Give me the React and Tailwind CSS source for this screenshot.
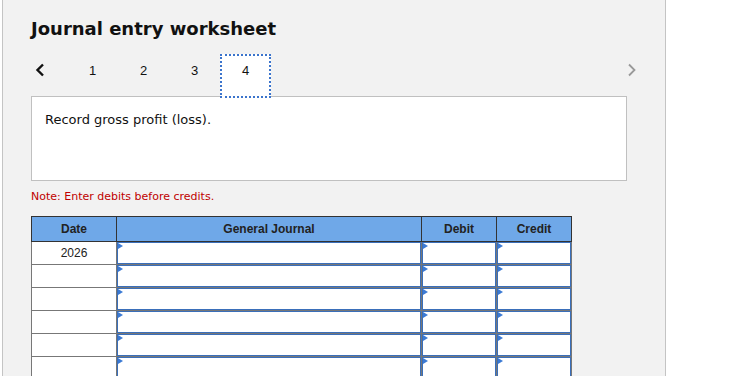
import React from "react";

const rows = ["2026", "", "", "", "", "", ""];

const InputCell = () => (
  <div className="relative h-[22px] border border-[#3a6fba] bg-white">
    <span className="absolute left-0 top-0 h-0 w-0 border-y-[3px] border-l-[5px] border-y-transparent border-l-[#3b7ad4]"></span>
  </div>
);

const App = () => {
  return (
    <div className="h-[376px] w-[745px] overflow-hidden bg-white">
      <div className="ml-[2px] h-[376px] w-[664px] border-x border-[#c4c4c4] bg-[#f2f2f2] pl-[28px] font-['DejaVu_Sans',sans-serif]">
        <h1 className="pt-[18px] text-[18px] font-bold leading-[22px] text-[#111]">
          Journal entry worksheet
        </h1>

        <div className="relative z-10 -mb-[2px] mt-[14px] flex h-[44px] w-[608px] items-start font-['Liberation_Sans',sans-serif] text-[13px] leading-[16px] text-[#111]">
          <div className="flex w-[36px] pl-[4px] pt-[9px]">
            <svg width="10" height="14" viewBox="0 0 10 14">
              <polyline points="8,1.5 2.5,7 8,12.5" fill="none" stroke="#111" strokeWidth="2.4" />
            </svg>
          </div>
          <div className="flex h-full w-[51px] justify-center pt-[9px]">1</div>
          <div className="flex h-full w-[51px] justify-center pt-[9px]">2</div>
          <div className="flex h-full w-[51px] justify-center pt-[9px]">3</div>
          <div className="flex h-full w-[51px] justify-center border-2 border-dotted border-[#3b74cc] bg-white pt-[7px]">
            4
          </div>
          <div className="ml-auto flex pr-[2px] pt-[9px]">
            <svg width="10" height="14" viewBox="0 0 10 14">
              <polyline points="2,1.5 7.5,7 2,12.5" fill="none" stroke="#999" strokeWidth="1.8" />
            </svg>
          </div>
        </div>

        <div className="h-[85px] w-[596px] border border-[#c0c0c0] bg-white pl-[13px] pt-[14px] text-[13px] leading-[18px] text-[#111]">
          Record gross profit (loss).
        </div>

        <p className="mt-[9px] text-[11px] leading-[14px] text-[#c00000]">
          Note: Enter debits before credits.
        </p>

        <div className="mt-[12px] w-[541px] font-['Liberation_Sans',sans-serif]">
          <div className="grid grid-cols-[84px_304px_74px_74px] gap-px bg-[#333] p-px text-[12px] font-bold text-[#222]">
            <div className="flex h-[24px] items-center justify-center bg-[#6fa8e8]">Date</div>
            <div className="flex h-[24px] items-center justify-center bg-[#6fa8e8]">General Journal</div>
            <div className="flex h-[24px] items-center justify-center bg-[#6fa8e8]">Debit</div>
            <div className="flex h-[24px] items-center justify-center bg-[#6fa8e8]">Credit</div>
          </div>
          <div className="grid grid-cols-[84px_304px_74px_74px] gap-px bg-[#777] px-px pb-px text-[12px] text-[#222]">
            {rows.map((date, i) => (
              <React.Fragment key={i}>
                <div className="flex h-[22px] items-center justify-center bg-white">{date}</div>
                <InputCell />
                <InputCell />
                <InputCell />
              </React.Fragment>
            ))}
          </div>
        </div>
      </div>
    </div>
  );
};

export default App;
